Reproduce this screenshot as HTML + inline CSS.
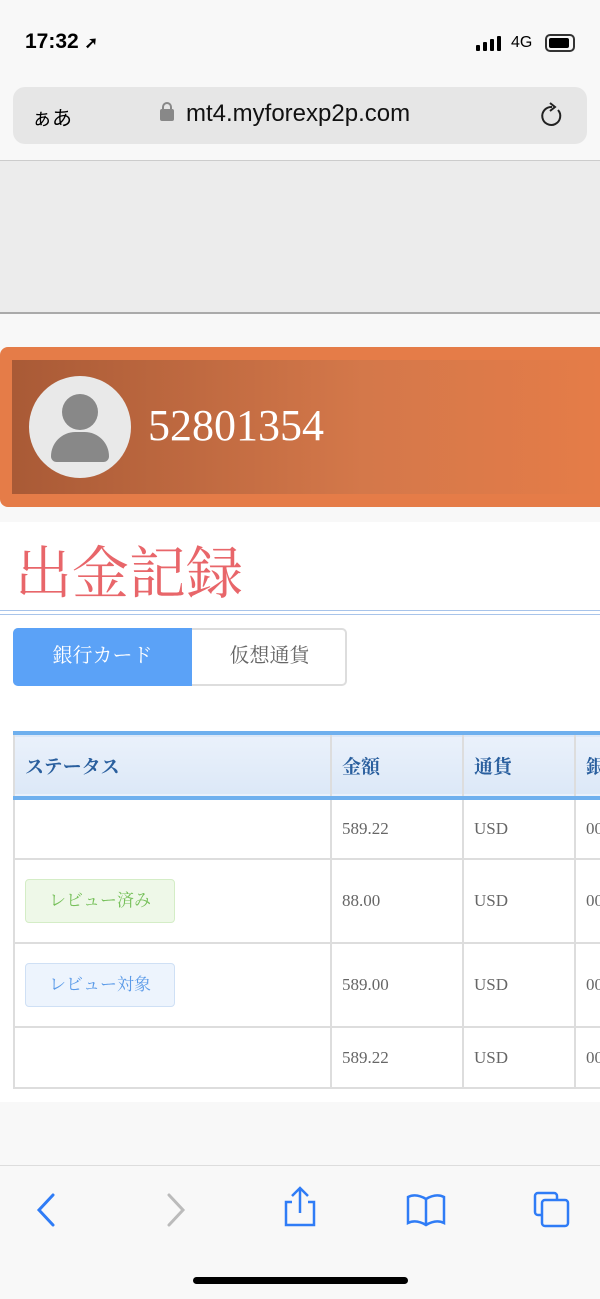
<!DOCTYPE html>
<html><head><meta charset="utf-8">
<style>
*{margin:0;padding:0;box-sizing:border-box}
body{width:600px;height:1299px;overflow:hidden;background:#f8f8f8;position:relative;font-family:"Liberation Serif","Noto Serif CJK SC","Noto Sans CJK JP",serif}
.abs{position:absolute}
.sans{font-family:"Liberation Sans","Noto Sans CJK JP",sans-serif}
td,th{border:2px solid #ddd;font-size:17px;color:#666;text-align:left;padding-left:10px;font-weight:normal}
th{color:#2a5f9e;font-size:19px;font-weight:bold}
</style></head><body>
<div class="abs sans" style="left:25px;top:30px;font-size:21px;font-weight:bold;color:#000">17:32 <span style="font-size:16px">➚</span></div>
<div class="abs" style="left:476px;top:45px;width:4px;height:6px;background:#000;border-radius:1px"></div>
<div class="abs" style="left:483px;top:42px;width:4px;height:9px;background:#000;border-radius:1px"></div>
<div class="abs" style="left:490px;top:39px;width:4px;height:12px;background:#000;border-radius:1px"></div>
<div class="abs" style="left:497px;top:36px;width:4px;height:15px;background:#000;border-radius:1px"></div>
<div class="abs sans" style="left:511px;top:34px;font-size:16px;color:#000">4G</div>
<div class="abs" style="left:545px;top:34px;width:30px;height:18px;border:2px solid #333;border-radius:5px;padding:2px"><div style="width:20px;height:10px;background:#000;border-radius:2px"></div></div>
<div class="abs" style="left:13px;top:87px;width:574px;height:57px;background:#e6e6e6;border-radius:12px"></div>
<div class="abs sans" style="left:32px;top:102px;font-size:20px;color:#000">ぁあ</div>
<div class="abs" style="left:160px;top:109px;width:14px;height:12px;background:#888;border-radius:2px"></div>
<div class="abs" style="left:162px;top:102px;width:10px;height:10px;border:2px solid #888;border-radius:5px 5px 0 0"></div>
<div class="abs sans" style="left:186px;top:100px;font-size:24px;color:#111">mt4.myforexp2p.com</div>
<svg class="abs" style="left:538px;top:102px" width="28" height="28" viewBox="0 0 28 28"><path d="M20 8 A9 9 0 1 1 14 5" fill="none" stroke="#222" stroke-width="2"/><path d="M12 1 L17 5 L12 9" fill="none" stroke="#222" stroke-width="2"/></svg>
<div class="abs" style="left:0;top:160px;width:600px;height:154px;background:#ececec;border-top:1px solid #ccc;border-bottom:2px solid #aaa"></div>
<div class="abs" style="left:0;top:347px;width:600px;height:160px;background:#e57c48;border-radius:8px 0 0 8px"></div>
<div class="abs" style="left:12px;top:360px;width:588px;height:134px;background:linear-gradient(90deg,#a95a36,#d4784a 60%,#e57c48)"></div>
<div class="abs" style="left:29px;top:376px;width:102px;height:102px;border-radius:50%;background:#e9e9e9"></div>
<div class="abs" style="left:62px;top:394px;width:36px;height:36px;border-radius:50%;background:#888"></div>
<div class="abs" style="left:51px;top:432px;width:58px;height:30px;border-radius:26px 26px 6px 6px;background:#888"></div>
<div class="abs" style="left:148px;top:400px;font-size:44px;color:#fff">52801354</div>
<div class="abs" style="left:0;top:522px;width:600px;height:580px;background:#fff"></div>
<div class="abs" style="left:15px;top:528px;font-size:57px;color:#e8666a">出金記録</div>
<div class="abs" style="left:0;top:610px;width:600px;height:5px;border-top:1px solid #a8c4ea;border-bottom:1px solid #a8c4ea"></div>
<div class="abs" style="left:13px;top:628px;width:334px;height:58px;border:2px solid #ddd;border-radius:5px;background:#fff"></div>
<div class="abs" style="left:13px;top:628px;width:179px;height:58px;background:#5ba2f7;border-radius:5px 0 0 5px;color:#fff;font-size:20px;text-align:center;line-height:56px">銀行カード</div>
<div class="abs" style="left:192px;top:628px;width:155px;height:58px;color:#666;font-size:20px;text-align:center;line-height:56px">仮想通貨</div>
<table class="abs" style="left:13px;top:731px;width:620px;border-collapse:collapse;background:#fff">
<tr style="height:65px;background:linear-gradient(#eaf1fb,#dce8f7);border-top:4px solid #6fb0ee;border-bottom:4px solid #6fb0ee"><th style="width:317px">ステータス</th><th style="width:132px">金額</th><th style="width:112px">通貨</th><th>銀</th></tr>
<tr style="height:61px"><td></td><td>589.22</td><td>USD</td><td>00</td></tr>
<tr style="height:84px"><td><span style="display:inline-block;width:150px;height:44px;line-height:42px;text-align:center;background:#eef8e8;border:1px solid #d4edc6;border-radius:4px;color:#76c05a">レビュー済み</span></td><td>88.00</td><td>USD</td><td>00</td></tr>
<tr style="height:84px"><td><span style="display:inline-block;width:150px;height:44px;line-height:42px;text-align:center;background:#edf4fd;border:1px solid #cfe0f5;border-radius:4px;color:#5a9ae8">レビュー対象</span></td><td>589.00</td><td>USD</td><td>00</td></tr>
<tr style="height:61px"><td></td><td>589.22</td><td>USD</td><td>00</td></tr>
</table>
<div class="abs" style="left:0;top:1165px;width:600px;height:134px;background:#f8f8f8;border-top:1px solid #ddd"></div>
<svg class="abs" style="left:0;top:1185px" width="600" height="50" viewBox="0 0 600 50">
<path d="M53 10 L39 25 L53 40" fill="none" stroke="#2f7cf6" stroke-width="3" stroke-linecap="round"/>
<path d="M169 10 L183 25 L169 40" fill="none" stroke="#bbb" stroke-width="3" stroke-linecap="round"/>
<path d="M292 17 H286 V40 H314 V17 H308 M300 28 V4 M292 11 L300 3 L308 11" fill="none" stroke="#2f7cf6" stroke-width="2.5"/>
<path d="M426 14 Q416 8 408 12 V38 Q416 34 426 40 Q436 34 444 38 V12 Q436 8 426 14 V40" fill="none" stroke="#2f7cf6" stroke-width="2.5"/>
<rect x="535" y="8" width="22" height="22" rx="3" fill="none" stroke="#2f7cf6" stroke-width="2.5"/>
<rect x="542" y="15" width="26" height="26" rx="3" fill="#f8f8f8" stroke="#2f7cf6" stroke-width="2.5"/>
</svg>
<div class="abs" style="left:193px;top:1277px;width:215px;height:7px;background:#000;border-radius:4px"></div>
</body></html>
